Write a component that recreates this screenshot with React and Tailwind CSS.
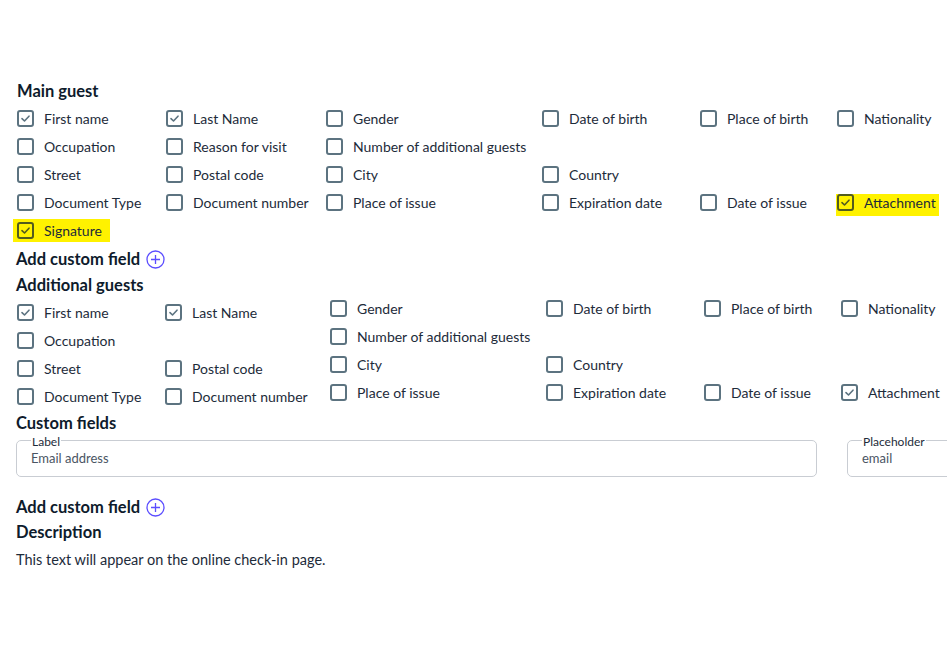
import React from "react";

const FONT = { fontFamily: "Lato, 'Open Sans', sans-serif" };

function Box({ checked, hl }) {
  const border = hl ? "border-[#525c1e]" : "border-[#5c7380]";
  const stroke = hl ? "#525c1e" : "#5c7380";
  return (
    <span className={`w-[17px] h-[17px] shrink-0 rounded-[3px] border-2 ${border} flex items-center justify-center`}>
      {checked && (
        <svg width="13" height="13" viewBox="0 0 13 13">
          <path d="M3 6.6 L5.5 9 L10 4.2" fill="none" stroke={stroke} strokeWidth="1.6" strokeLinecap="round" strokeLinejoin="round" />
        </svg>
      )}
    </span>
  );
}

function Item({ label, checked, hl }) {
  if (!label) return <div className="h-[28px]" />;
  if (hl === "sig") {
    return (
      <div className="h-[28px] flex items-center">
        <span className="flex items-center gap-[10px] h-[23px] bg-[#fff200] -ml-[4px] pl-[4px] pr-[8px]">
          <Box checked={checked} hl />
          <span className="text-[14px] text-[#1d2b3a]">{label}</span>
        </span>
      </div>
    );
  }
  if (hl === "att") {
    return (
      <div className="h-[28px] flex items-end">
        <span className="flex items-start gap-[10px] h-[22px] bg-[#fff200] -ml-[1px] pl-[1px] pr-[3px]">
          <Box checked={checked} hl />
          <span className="text-[14px] leading-[17px] text-[#1d2b3a]">{label}</span>
        </span>
      </div>
    );
  }
  return (
    <div className="h-[28px] flex items-center gap-[10px]">
      <Box checked={checked} />
      <span className="text-[14px] text-[#1d2b3a] whitespace-nowrap">{label}</span>
    </div>
  );
}

function Plus() {
  return (
    <svg width="19" height="19" viewBox="0 0 19 19" className="shrink-0">
      <circle cx="9.5" cy="9.5" r="8.5" fill="none" stroke="#5b4dff" strokeWidth="1.3" />
      <path d="M9.5 5 V14 M5 9.5 H14" stroke="#5b4dff" strokeWidth="1.3" />
    </svg>
  );
}

function Heading({ children, className = "" }) {
  return <div className={`text-[16.5px] leading-[20px] font-bold text-[#0e1b2c] ${className}`}>{children}</div>;
}

function AddCustom({ className = "" }) {
  return (
    <div className={`flex items-center gap-[6px] h-[20px] ${className}`}>
      <span className="text-[16.5px] font-bold text-[#0e1b2c]">Add custom field</span>
      <Plus />
    </div>
  );
}

const mainRows = [
  [["First name", true], ["Last Name", true], ["Gender"], ["Date of birth"], ["Place of birth"], ["Nationality"]],
  [["Occupation"], ["Reason for visit"], ["Number of additional guests"], [null], [null], [null]],
  [["Street"], ["Postal code"], ["City"], ["Country"], [null], [null]],
  [["Document Type"], ["Document number"], ["Place of issue"], ["Expiration date"], ["Date of issue"], ["Attachment", true, "att"]],
  [["Signature", true, "sig"], [null], [null], [null], [null], [null]],
];

const addLeft = [
  [["First name", true], ["Last Name", true]],
  [["Occupation"], [null]],
  [["Street"], ["Postal code"]],
  [["Document Type"], ["Document number"]],
];
const addRight = [
  [["Gender"], ["Date of birth"], ["Place of birth"], ["Nationality"]],
  [["Number of additional guests"], [null], [null], [null]],
  [["City"], ["Country"], [null], [null]],
  [["Place of issue"], ["Expiration date"], ["Date of issue"], ["Attachment", true]],
];

function Field({ legend, value, className = "" }) {
  return (
    <fieldset className={`border border-[#c9cdd3] rounded-[5px] pl-[14px] pr-[14px] pt-[3px] pb-[10px] ${className}`}>
      <legend className="px-[1px] text-[12px] leading-[14px] text-[#1d2b3a] translate-y-[2px]">{legend}</legend>
      <div className="text-[13px] leading-[16px] text-[#4a5563]">{value}</div>
    </fieldset>
  );
}

export default function App() {
  return (
    <div style={FONT} className="w-[947px] h-[654px] overflow-hidden bg-white pt-[81px] pl-[16px]">
      <Heading className="ml-[1px]">Main guest</Heading>
      <div className="ml-[1px] mt-[3px] grid grid-cols-[149px_160px_216px_158px_137px_auto]">
        {mainRows.flat().map(([l, c, h], i) => (
          <Item key={i} label={l} checked={c} hl={h} />
        ))}
      </div>
      <AddCustom className="mt-[5px]" />
      <Heading className="mt-[6px]">Additional guests</Heading>
      <div className="flex items-start -mt-[1px]">
        <div className="ml-[1px] pt-[4px] grid grid-cols-[148px_165px]">
          {addLeft.flat().map(([l, c], i) => (
            <Item key={i} label={l} checked={c} />
          ))}
        </div>
        <div className="grid grid-cols-[216px_158px_137px_auto] content-start">
          {addRight.flat().map(([l, c], i) => (
            <Item key={i} label={l} checked={c} />
          ))}
        </div>
      </div>
      <Heading className="mt-[3px]">Custom fields</Heading>
      <div className="flex gap-[30px]">
        <Field legend="Label" value="Email address" className="w-[801px] shrink-0" />
        <Field legend="Placeholder" value="email" className="w-[200px] shrink-0" />
      </div>
      <AddCustom className="mt-[20px]" />
      <Heading className="mt-[5px]">Description</Heading>
      <div className="mt-[8px] text-[14.5px] leading-[20px] text-[#1d2b3a]">This text will appear on the online check-in page.</div>
    </div>
  );
}
